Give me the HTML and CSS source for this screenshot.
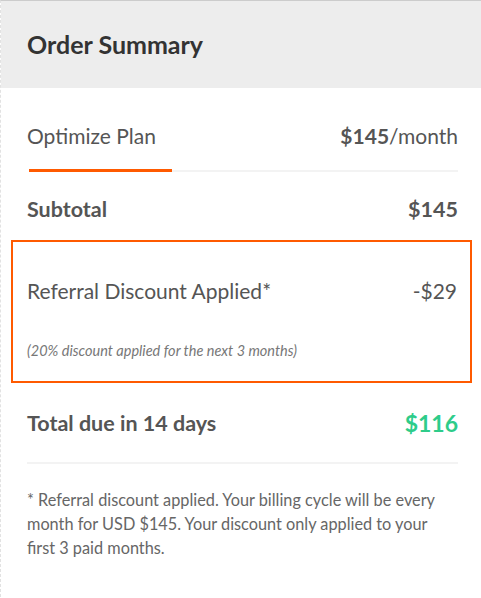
FILE: index.html
```html
<!DOCTYPE html>
<html>
<head>
<meta charset="utf-8">
<link rel="stylesheet" href="styles.css">
</head>
<body>
<div class="card">
  <div class="card-header">
    <h2 class="title">Order Summary</h2>
  </div>
  <div class="card-body">
    <div class="row plan-row">
      <span class="plan-name">Optimize Plan</span>
      <span class="plan-price"><b>$145</b>/month</span>
    </div>
    <div class="row subtotal-row">
      <span>Subtotal</span>
      <span>$145</span>
    </div>
    <div class="discount-box">
      <div class="row discount-row">
        <span>Referral Discount Applied*</span>
        <span>-$29</span>
      </div>
      <div class="discount-note">(20% discount applied for the next 3 months)</div>
    </div>
    <div class="row total-row">
      <span>Total due in 14 days</span>
      <span class="total-amount">$116</span>
    </div>
    <p class="footnote">* Referral discount applied. Your billing cycle will be every month for USD $145. Your discount only applied to your first 3 paid months.</p>
  </div>
</div>
</body>
</html>
```

FILE: styles.css
```css
html, body {
  margin: 0;
  padding: 0;
  background: #ffffff;
}
body {
  font-family: Lato, "Open Sans", sans-serif;
  color: #555555;
}
.card {
  border-top: 1px solid #cccccc;
  border-left: 1px dashed #e2e2e2;
  height: 597px;
  box-sizing: border-box;
}
.card-header {
  background: #ededed;
  height: 87px;
  display: flex;
  align-items: center;
  padding-left: 26px;
}
.title {
  margin: 0;
  font-size: 25px;
  font-weight: 700;
  color: #333333;
  line-height: 28px;
  position: relative;
  top: -1px;
}
.card-body {
  padding: 0 23px 0 26px;
}
.row {
  display: flex;
  justify-content: space-between;
  align-items: center;
  font-size: 21px;
  line-height: 24px;
}
.plan-row {
  position: relative;
  padding-top: 36px;
  padding-bottom: 22px;
  border-bottom: 2px solid #f3f3f3;
  margin-left: 2px;
}
.plan-row .plan-name {
  margin-left: -2px;
}
.plan-row::after {
  content: "";
  position: absolute;
  left: 0;
  bottom: -2px;
  width: 143px;
  height: 3px;
  background: #ff5a00;
}
.plan-price b {
  font-weight: 700;
}
.subtotal-row {
  font-weight: 700;
  font-size: 21.5px;
  padding-top: 25px;
  padding-bottom: 19px;
  color: #555555;
}
.discount-box {
  margin: 0 -14px 0 -16px;
  border: 2px solid #ff5a00;
  padding: 37px 13px 20px 14px;
}
.discount-note {
  margin-top: 38px;
  font-size: 14.5px;
  line-height: 20px;
  font-style: italic;
  color: #777777;
}
.total-row {
  font-weight: 700;
  font-size: 21.5px;
  padding-top: 28px;
  padding-bottom: 27px;
  border-bottom: 2px solid #f3f3f3;
}
.total-amount {
  color: #2ecc8a;
  font-size: 23px;
}
.footnote {
  margin: 24px 0 0;
  font-size: 16.3px;
  line-height: 24px;
  color: #666666;
}
```
